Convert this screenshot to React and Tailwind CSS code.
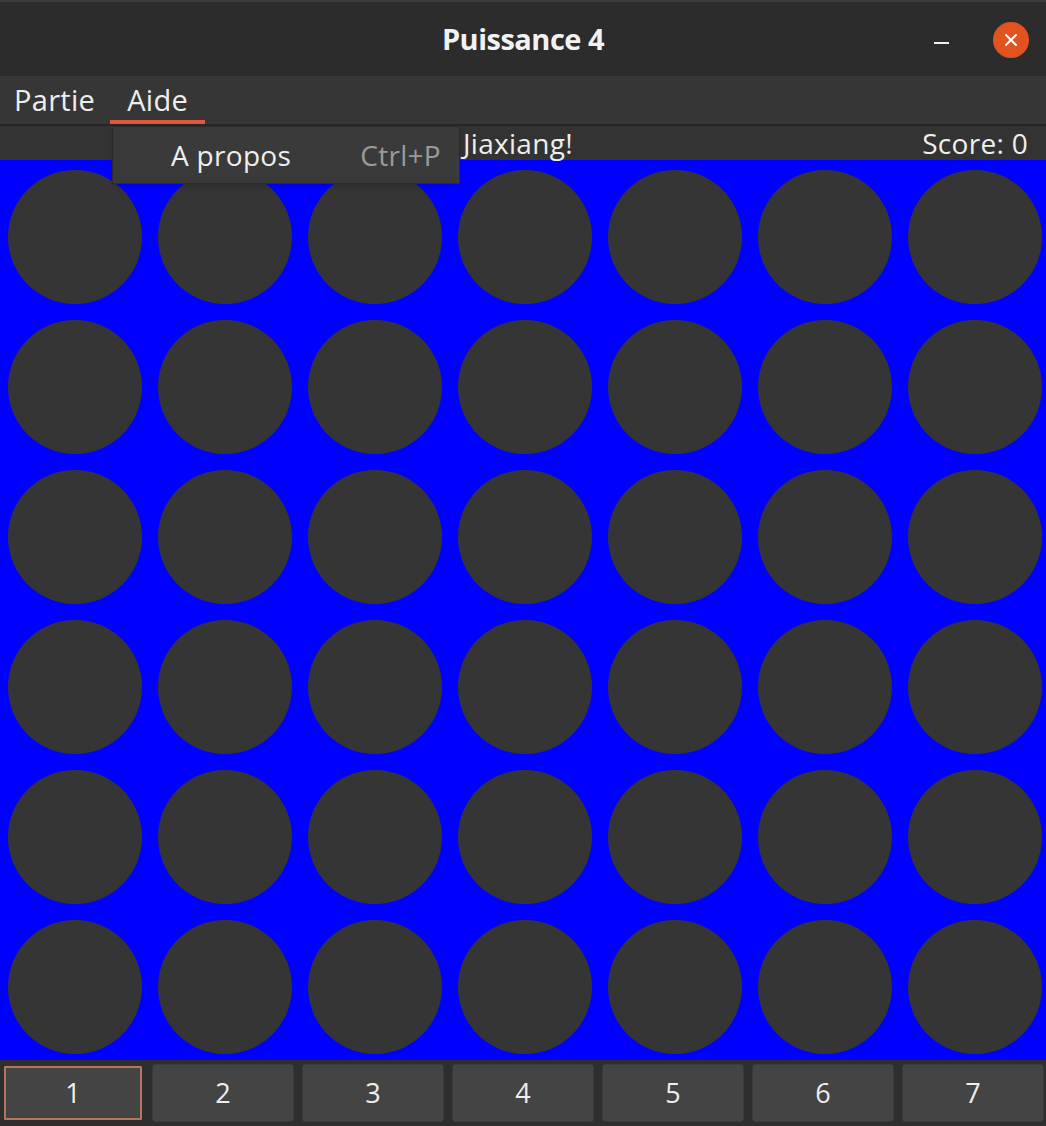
const COLS = 7;
const ROWS = 6;

function TitleBar() {
    return (
        <div className="h-[76px] bg-[#2c2c2c] border-t-2 border-[#3d3d3d] flex items-center relative">
            <div className="flex-1 text-center text-[29px] font-bold text-[#f2f2f2] tracking-[-0.5px]">
                Puissance 4
            </div>
            {/* window controls */}
            <div className="absolute right-[17px] top-[20px] flex items-center gap-[44px]">
                <span className="block w-[15px] h-[2px] bg-[#eeeeee] mt-[6px]"></span>
                <span className="w-[36px] h-[36px] rounded-full bg-[#e2531f] flex items-center justify-center">
                    <svg width="16" height="16" viewBox="0 0 16 16">
                        <path d="M3 3 L13 13 M13 3 L3 13" stroke="#ffffff" strokeWidth="2" strokeLinecap="round" />
                    </svg>
                </span>
            </div>
        </div>
    );
}

function MenuBar() {
    return (
        <div className="h-[48px] bg-[#363636] flex items-stretch text-[29px] text-[#eeeeee] tracking-[0.3px]">
            <div className="pl-[14px] pr-[15px] flex items-center">Partie</div>
            <div className="px-[17px] flex items-center border-b-[4px] border-[#e05a3a] pt-[4px]">Aide</div>
        </div>
    );
}

function StatusBar() {
    // the start of the greeting sits under the open menu
    return (
        <div className="h-[36px] bg-[#333333] border-t-2 border-[#262626] flex items-center text-[28px] text-[#eeeeee] tracking-[0.3px] whitespace-nowrap">
            <span className="w-[463px] shrink-0"></span>
            <span>Jiaxiang!</span>
            <span className="flex-1 text-right pr-[18px]">Score: 0</span>
        </div>
    );
}

function Board() {
    const cells = Array.from({ length: ROWS * COLS });
    return (
        <div className="bg-[#0000ff] h-[900px] overflow-hidden">
            <div className="grid grid-cols-[repeat(7,150px)] grid-rows-[repeat(6,150px)] pt-[2px]">
                {cells.map((_, i) => (
                    <div key={i} className="flex items-center justify-center">
                        <div className="w-[134px] h-[134px] rounded-full bg-[#353535]"></div>
                    </div>
                ))}
            </div>
        </div>
    );
}

function ColumnButtons() {
    return (
        <div className="h-[66px] bg-[#2e2e2e] flex gap-[8px] px-[2px] pt-[4px]">
            {Array.from({ length: COLS }).map((_, i) => (
                <button
                    key={i}
                    className={
                        i === 0
                            ? 'w-[142px] h-[58px] rounded-[3px] bg-[#444444] border-[3px] border-[#2e2e2e] outline outline-2 -outline-offset-[4px] outline-[#b4765f] text-[27px] text-[#eeeeee]'
                            : 'w-[142px] h-[58px] rounded-[3px] bg-[#444444] border border-[#3a3a3a] text-[27px] text-[#eeeeee]'
                    }
                >
                    {i + 1}
                </button>
            ))}
        </div>
    );
}

export default function App() {
    return (
        <div className="w-[1046px] h-[1126px] overflow-hidden relative bg-[#2e2e2e] font-['Open_Sans','Noto_Sans',sans-serif]">
            <TitleBar />
            <MenuBar />
            <StatusBar />
            <Board />
            <ColumnButtons />

            {/* Aide dropdown */}
            <div className="absolute left-[112px] top-[126px] w-[348px] h-[58px] bg-[#3a3a3a] border border-[#2a2a2a] shadow-md flex items-center justify-between pl-[58px] pr-[18px] text-[28px] tracking-[0.3px]">
                <span className="text-[#eeeeee]">A propos</span>
                <span className="text-[#9a9a9a]">Ctrl+P</span>
            </div>
        </div>
    );
}
